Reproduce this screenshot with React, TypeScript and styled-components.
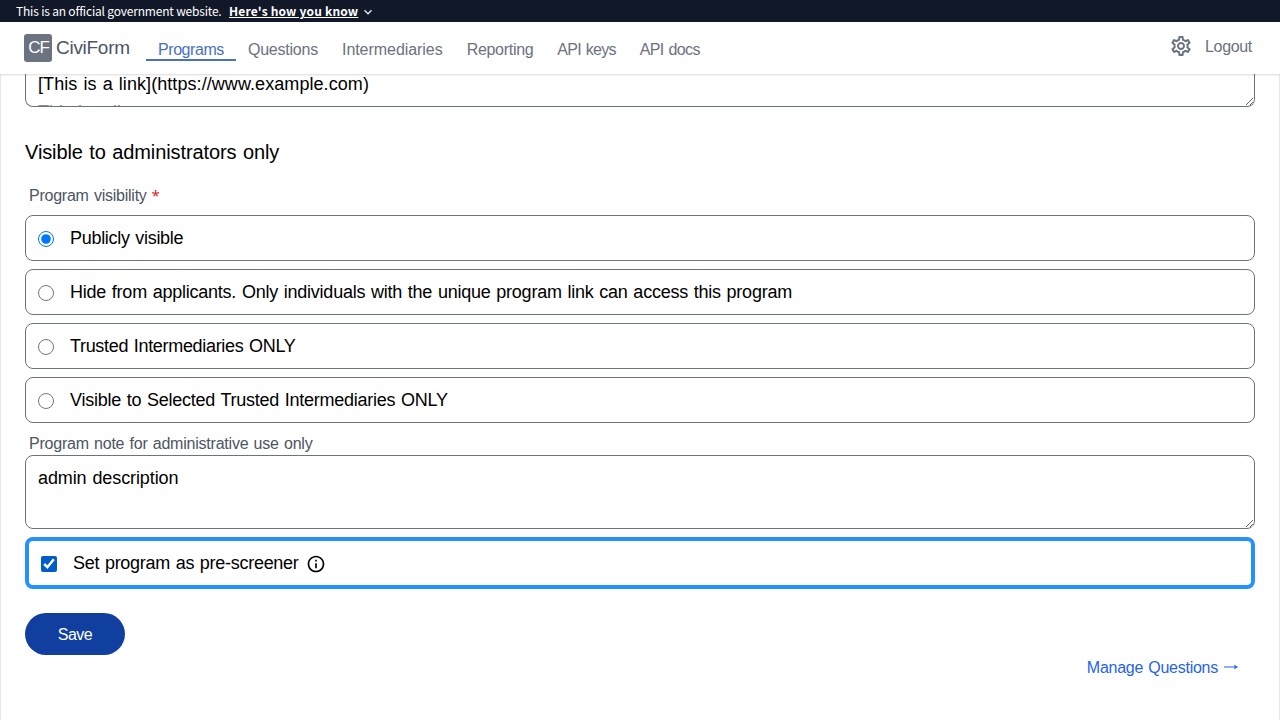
import React from "react";
import styled, { createGlobalStyle } from "styled-components";
import { MdOutlineSettings, MdInfoOutline, MdExpandMore } from "react-icons/md";

const GlobalStyle = createGlobalStyle`
  *, *::before, *::after { box-sizing: border-box; }
  body {
    margin: 0;
    background: #fff;
    font-family: "Liberation Sans", Arial, sans-serif;
    color: #000;
  }
`;

const Page = styled.div`
  display: flex;
  flex-direction: column;
  height: 720px;
  overflow: hidden;
`;

const Banner = styled.div`
  display: flex;
  align-items: center;
  flex: none;
  height: 22px;
  padding-left: 16px;
  background: #111827;
  color: #fff;
  font-family: "Noto Sans CJK JP", sans-serif;
  font-size: 12px;
  line-height: 22px;
`;

const BannerText = styled.span`
  width: 213px;
  letter-spacing: -0.19px;
  white-space: nowrap;
`;

const BannerLink = styled.a`
  font-weight: 700;
  letter-spacing: 0.18px;
  text-decoration: underline;
  margin-right: 2px;
`;

const Chevron = styled(MdExpandMore)`
  margin-top: 2px;
  color: #e5e7eb;
`;

const Header = styled.header`
  display: flex;
  align-items: center;
  flex: none;
  height: 52px;
  padding: 0 28px 0 24px;
  background: #fff;
  box-shadow: 0 1px 2px rgba(0, 0, 0, 0.15);
  z-index: 1;
`;

const Text = styled.span<{ $track?: number }>`
  letter-spacing: ${(p) => p.$track ?? 0}px;
  word-spacing: 1px;
  white-space: pre;
`;

const Logo = styled.span`
  display: flex;
  align-items: center;
  justify-content: center;
  width: 28px;
  height: 28px;
  margin-right: 4px;
  padding-left: 1px;
  border-radius: 3px;
  background: #6b7280;
  color: #fff;
  font-size: 17px;
  line-height: 28px;
`;

const Brand = styled.span`
  width: 90px;
  color: #4b5563;
  font-size: 19px;
`;

const Nav = styled.nav`
  display: flex;
  align-self: flex-start;
  padding-top: 15px;
`;

const NavLink = styled.a<{ $active?: boolean }>`
  height: 24px;
  padding: 1px 12px 0;
  border-bottom: 2px solid ${(p) => (p.$active ? "#4b70bd" : "transparent")};
  color: ${(p) => (p.$active ? "#4b70bd" : "#6b7280")};
  font-size: 16px;
  line-height: 24px;
`;

const Account = styled.div`
  display: flex;
  align-items: center;
  gap: 12px;
  margin: -4px 0 0 auto;
  color: #6b7280;
  font-size: 16px;
  line-height: 25px;
`;

const Main = styled.main`
  flex: 1;
  padding: 0 24px;
  border: solid #e5e7eb;
  border-width: 0 1px;
`;

const ScrolledField = styled.div`
  height: 33px;
  padding-left: 12px;
  overflow: hidden;
  resize: vertical;
  border: 1px solid #6b7280;
  border-top: 0;
  border-radius: 0 0 8px 8px;
  font-size: 18px;
  line-height: 28px;
`;

const FieldLine = styled.div<{ $faded?: boolean }>`
  color: ${(p) => (p.$faded ? "#8b8b8b" : "#000")};
  &:first-child { margin-top: -4px; }
`;

const Heading = styled.h2`
  margin: 31px 0 0;
  font-size: 20px;
  font-weight: 400;
  line-height: 28px;
`;

const Label = styled.div`
  height: 24px;
  padding: 1px 0 0 4px;
  color: #4b5563;
  font-size: 16px;
  line-height: 24px;
`;

const VisibilityLabel = styled(Label)`
  margin: 17px 0 8px;
  padding-top: 0;
`;

const NoteLabel = styled(Label)`
  margin-top: 8px;
`;

const Required = styled.span`
  margin-left: 5px;
  color: #dc2626;
  font-family: "Noto Sans", sans-serif;
  font-size: 15px;
`;

const Options = styled.div`
  display: flex;
  flex-direction: column;
  gap: 8px;
`;

const Option = styled.label`
  display: flex;
  align-items: center;
  gap: 16px;
  height: 46px;
  padding: 0 12px;
  border: 1px solid #6b7280;
  border-radius: 8px;
  font-size: 18px;
  line-height: 28px;
`;

const Control = styled.input`
  width: 16px;
  height: 16px;
  margin: 2px 0 0;
`;

const Note = styled.textarea`
  display: block;
  width: 100%;
  height: 74px;
  padding: 8px 12px;
  border: 1px solid #6b7280;
  border-radius: 8px;
  color: #000;
  font: 18px/28px "Liberation Sans", Arial, sans-serif;
  letter-spacing: -0.1px;
  word-spacing: 1px;
`;

const Prescreener = styled(Option)`
  height: 52px;
  margin-top: 8px;
  border: 4px solid #2491ff;
  ${Control} { accent-color: #005cc8; }
`;

const InfoIcon = styled(MdInfoOutline)`
  margin: 2px 0 0 -9px;
`;

const SaveButton = styled.button`
  display: block;
  width: 100px;
  height: 42px;
  margin-top: 24px;
  padding: 1px 0 0;
  border: 0;
  border-radius: 21px;
  background: #113f9f;
  color: #fff;
  font: 16px "Liberation Sans", Arial, sans-serif;
`;

const Footer = styled.div`
  display: flex;
  align-items: center;
  justify-content: flex-end;
  gap: 6px;
  padding: 1px 17px 0 0;
  color: #2563eb;
  font-size: 16px;
  line-height: 24px;
`;

const Arrow = styled.svg`
  margin-top: -3px;
`;

const navItems = [
  { label: "Programs", track: -0.43, active: true },
  { label: "Questions", track: -0.22 },
  { label: "Intermediaries", track: -0.05 },
  { label: "Reporting", track: -0.3 },
  { label: "API keys", track: -0.72 },
  { label: "API docs", track: -0.62 },
];

const visibilityOptions = [
  { label: "Publicly visible", track: -0.3 },
  { label: "Hide from applicants. Only individuals with the unique program link can access this program", track: -0.235 },
  { label: "Trusted Intermediaries ONLY", track: -0.32 },
  { label: "Visible to Selected Trusted Intermediaries ONLY", track: -0.25 },
];

export default function App() {
  return (
    <Page>
      <GlobalStyle />
      <Banner>
        <BannerText>This is an official government website.</BannerText>
        <BannerLink>Here's how you know</BannerLink>
        <Chevron size={16} />
      </Banner>
      <Header>
        <Logo><Text $track={-1}>CF</Text></Logo>
        <Brand><Text $track={-0.28}>CiviForm</Text></Brand>
        <Nav>
          {navItems.map((item) => (
            <NavLink key={item.label} $active={item.active}>
              <Text $track={item.track}>{item.label}</Text>
            </NavLink>
          ))}
        </Nav>
        <Account>
          <MdOutlineSettings size={24} />
          <Text $track={-0.32}>Logout</Text>
        </Account>
      </Header>
      <Main>
        <ScrolledField>
          <FieldLine><Text $track={0.07}>[This is a link](https://www.example.com)</Text></FieldLine>
          <FieldLine $faded><Text>This is a list:</Text></FieldLine>
        </ScrolledField>
        <Heading><Text $track={-0.1}>Visible to administrators only</Text></Heading>
        <VisibilityLabel>
          <Text $track={-0.24}>Program visibility</Text>
          <Required>*</Required>
        </VisibilityLabel>
        <Options>
          {visibilityOptions.map((option, i) => (
            <Option key={option.label}>
              <Control type="radio" name="visibility" defaultChecked={i === 0} />
              <Text $track={option.track}>{option.label}</Text>
            </Option>
          ))}
        </Options>
        <NoteLabel><Text $track={-0.22}>Program note for administrative use only</Text></NoteLabel>
        <Note defaultValue="admin description" />
        <Prescreener>
          <Control type="checkbox" defaultChecked />
          <Text $track={-0.28}>Set program as pre-screener</Text>
          <InfoIcon size={20} />
        </Prescreener>
        <SaveButton><Text $track={-0.5}>Save</Text></SaveButton>
        <Footer>
          <Text $track={-0.26}>Manage Questions</Text>
          <Arrow width="14" height="6" viewBox="0 0 14 6">
            <path d="M0 3h11" stroke="currentColor" strokeWidth="1" />
            <path d="M10 .6 14 3l-4 2.4.8-2.4z" fill="currentColor" />
          </Arrow>
        </Footer>
      </Main>
    </Page>
  );
}
